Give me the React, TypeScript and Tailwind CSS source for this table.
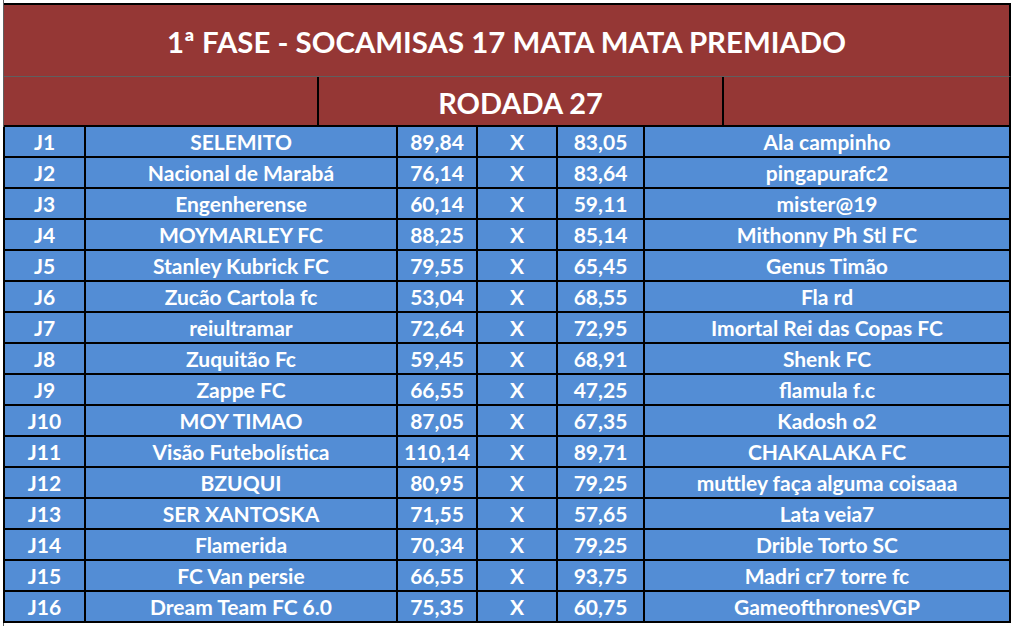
const jogos = [
  ["J1", "SELEMITO", "89,84", "83,05", "Ala campinho"],
  ["J2", "Nacional de Marabá", "76,14", "83,64", "pingapurafc2"],
  ["J3", "Engenherense", "60,14", "59,11", "mister@19"],
  ["J4", "MOYMARLEY FC", "88,25", "85,14", "Mithonny Ph Stl FC"],
  ["J5", "Stanley Kubrick FC", "79,55", "65,45", "Genus Timão"],
  ["J6", "Zucão Cartola fc", "53,04", "68,55", "Fla rd"],
  ["J7", "reiultramar", "72,64", "72,95", "Imortal Rei das Copas FC"],
  ["J8", "Zuquitão Fc", "59,45", "68,91", "Shenk FC"],
  ["J9", "Zappe FC", "66,55", "47,25", "flamula f.c"],
  ["J10", "MOY TIMAO", "87,05", "67,35", "Kadosh o2"],
  ["J11", "Visão Futebolística", "110,14", "89,71", "CHAKALAKA FC"],
  ["J12", "BZUQUI", "80,95", "79,25", "muttley faça alguma coisaaa"],
  ["J13", "SER XANTOSKA", "71,55", "57,65", "Lata veia7"],
  ["J14", "Flamerida", "70,34", "79,25", "Drible Torto SC"],
  ["J15", "FC Van persie", "66,55", "93,75", "Madri cr7 torre fc"],
  ["J16", "Dream Team FC 6.0", "75,35", "60,75", "GameofthronesVGP"],
];

const cell = "flex items-center justify-center border-r-2 border-black";

export default function App() {
  return (
    <div className="w-[1014px] h-[626px] bg-white overflow-hidden font-['Lato',sans-serif] font-bold text-white">
      <div className="ml-[3px] pt-[3px] h-full border-l border-[#5f5f5f] w-[1008px]">
        {/* titulo */}
        <div className="h-[74px] bg-[#953735] border-t-2 border-b border-r-2 border-t-black border-r-black border-b-[#5f5f5f] flex items-center justify-center pt-[3px]">
          <span className="text-[29.4px] leading-none">1ª FASE - SOCAMISAS 17 MATA MATA PREMIADO</span>
        </div>

        {/* rodada */}
        <div className="h-[50px] bg-[#953735] border-b-2 border-r-2 border-black flex">
          <div className="w-[315px] border-r-2 border-black" />
          <div className="w-[405px] border-r-2 border-black flex items-center justify-center pt-[3px]">
            <span className="text-[29px] leading-none">RODADA 27</span>
          </div>
          <div className="flex-1" />
        </div>

        {/* jogos */}
        <div className="-ml-px border-l-2 border-black">
          {jogos.map(([j, casa, p1, p2, fora]) => (
            <div key={j} className="h-[31px] flex bg-[#538dd5] border-b-2 border-black text-[21px] leading-none">
              <div className={`${cell} w-[81px]`}>{j}</div>
              <div className={`${cell} w-[312px]`}>{casa}</div>
              <div className={`${cell} w-[80px]`}>{p1}</div>
              <div className={`${cell} w-[80px]`}>X</div>
              <div className={`${cell} w-[87px]`}>{p2}</div>
              <div className={`${cell} w-[366px]`}>{fora}</div>
            </div>
          ))}
        </div>
      </div>
    </div>
  );
}
